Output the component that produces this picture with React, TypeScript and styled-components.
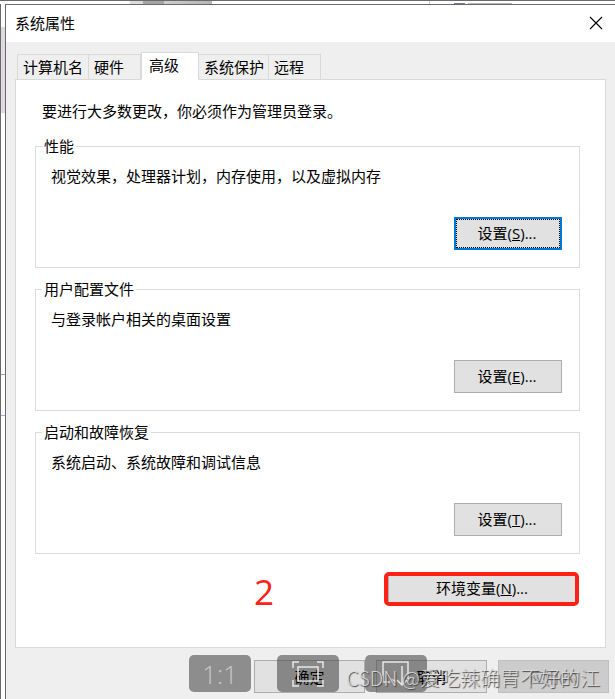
import React from "react";
import styled, { createGlobalStyle } from "styled-components";

const GlobalStyle = createGlobalStyle`
  * { box-sizing: border-box; }
  html, body, #root { height: 100%; }
  body {
    margin: 0;
    overflow: hidden;
    background: #fff;
    color: #000;
    font: 15px/20px "Open Sans", "Noto Sans CJK SC", sans-serif;
  }
  button { font: inherit; color: inherit; padding: 0; }
`;

const Desktop = styled.div`
  display: grid;
  grid-template: 4px 1fr / 5px 1fr;
  height: 100vh;
  overflow: hidden;
`;

const BackTop = styled.div`
  grid-column: 1 / 3;
  border-top: 1px solid #6b696b;
  background:
    linear-gradient(#a5a5a5, #a5a5a5) 143px 0 / 21px 3px no-repeat,
    linear-gradient(90deg, #dededf, #b5b5b5) 130px 0 / 82px 3px no-repeat,
    linear-gradient(#6b7f9c, #6b7f9c) 454px 2px / 11px 1px no-repeat,
    linear-gradient(#b5b5b5, #b5b5b5) 468px 2px / 44px 1px no-repeat,
    linear-gradient(#c6c6c6, #c6c6c6) 429px 0 / 1px 3px no-repeat,
    #fff;
`;

const BackLeft = styled.div`
  border-left: 1px solid #6b696b;
  background:
    linear-gradient(#dedbde, #dedbde) 0 23px / 4px 86px no-repeat,
    linear-gradient(#94b2d6, #94b2d6) 0 370px / 4px 1px no-repeat,
    linear-gradient(#94b2d6, #94b2d6) 0 411px / 4px 1px no-repeat,
    #fff;
`;

const Dialog = styled.main`
  display: flex;
  flex-direction: column;
  min-width: 0;
  min-height: 0;
  border: solid #6b696b;
  border-width: 1px 0 0 1px;
  background: #efefef;
`;

const TitleBar = styled.header`
  display: flex;
  flex: none;
  align-items: center;
  justify-content: space-between;
  height: 37px;
  padding: 0 12px 2px 9px;
  background: #fff;
`;

const Title = styled.h1`
  margin: 0;
  font-size: 15px;
  font-weight: 400;
`;

const CloseButton = styled.button`
  display: flex;
  border: 0;
  background: none;
`;

const TabList = styled.div`
  display: flex;
  flex: none;
  align-items: flex-end;
  height: 38px;
  margin-bottom: -1px;
  padding-left: 11px;
`;

const Tab = styled.button<{ $width: number; $active?: boolean }>`
  position: relative;
  width: ${(p) => p.$width}px;
  height: ${(p) => (p.$active ? 28 : 26)}px;
  padding: ${(p) => (p.$active ? "0 0 2px 7px" : "0 0 0 5px")};
  border: 1px solid #d9d9d9;
  border-left-width: ${(p) => (p.$width === 72 || p.$active ? 1 : 0)}px;
  border-bottom-color: ${(p) => (p.$active ? "#fff" : "#d9d9d9")};
  background: ${(p) => (p.$active ? "#fff" : "#efefef")};
  text-align: left;
  white-space: nowrap;
`;

const Panel = styled.section`
  flex: none;
  margin: 0 9px;
  padding: 21px 25px 37px 19px;
  border: 1px solid #d9d9d9;
  background: #fff;
`;

const Notice = styled.p`
  margin: 0 0 15px 7px;
`;

const Group = styled.fieldset`
  display: flex;
  flex-direction: column;
  min-width: 0;
  height: 132px;
  margin: 0 0 11px;
  padding: 10px 17px 17px 15px;
  border: 1px solid #dcdcdc;
`;

const Legend = styled.legend`
  margin-left: -9px;
  padding: 0 2px;
`;

const Description = styled.p`
  margin: 0;
`;

const PushButton = styled.button<{ $default?: boolean }>`
  align-self: flex-end;
  width: 108px;
  height: 33px;
  margin-top: auto;
  padding: 0 2px 2px 0;
  border: ${(p) => (p.$default ? "2px solid #0078d7" : "1px solid #adadad")};
  outline: ${(p) => (p.$default ? "1px dotted #000" : "none")};
  outline-offset: -3px;
  background: #e1e1e1;
`;

const EnvironmentRow = styled.div`
  display: flex;
  align-items: center;
  justify-content: space-between;
  margin: 14px 0 0;
`;

const StepNumber = styled.span`
  margin-left: 219px;
  padding-top: 6px;
  color: #ff2116;
  font: 35px/36px "Open Sans", sans-serif;
`;

const Highlight = styled.div`
  display: flex;
  width: 195px;
  height: 34px;
  margin-right: 1px;
  border: 4px solid #ff2116;
  border-radius: 5px;
`;

const EnvironmentButton = styled.button`
  flex: 1;
  padding-bottom: 3px;
  border: 0;
  border-left: 1px solid #adadad;
  background: #e1e1e1;
`;

const Footer = styled.footer`
  display: flex;
  position: relative;
  flex: 1;
  align-items: flex-start;
  justify-content: flex-end;
  gap: 11px;
  min-height: 50px;
  padding: 12px 6px 0 0;
`;

const FooterButton = styled.button`
  width: 111px;
  height: 33px;
  border: 1px solid #adadad;
  background: #e1e1e1;
  &:disabled {
    border-color: #bfbfbf;
    background: #ccc;
    color: #838383;
  }
`;

const FooterLabel = styled.span`
  position: relative;
  z-index: 1;
`;

const ViewerTools = styled.div`
  display: flex;
  position: absolute;
  top: 7px;
  left: 183px;
  gap: 26px;
`;

const ViewerButton = styled.button`
  display: flex;
  align-items: center;
  justify-content: center;
  width: 62px;
  height: 37px;
  border: 0;
  border-radius: 5px;
  background: rgba(70, 70, 70, 0.58);
  color: #c8c8c8;
  font-size: 26px;
  font-weight: 300;
  svg {
    position: relative;
    z-index: 2;
  }
`;

const Watermark = styled.span`
  position: absolute;
  z-index: 3;
  top: 18px;
  right: 15px;
  color: rgba(225, 225, 225, 0.85);
  font: 20px/24px "Noto Sans CJK SC", sans-serif;
  font-weight: 300;
  text-shadow: 1px 1px 1px #444;
  white-space: nowrap;
`;

const tabs = [
  { label: "计算机名", width: 72 },
  { label: "硬件", width: 52 },
  { label: "高级", width: 58, active: true },
  { label: "系统保护", width: 70 },
  { label: "远程", width: 52 },
];

const groups = [
  { name: "性能", text: "视觉效果，处理器计划，内存使用，以及虚拟内存", hotkey: "S" },
  { name: "用户配置文件", text: "与登录帐户相关的桌面设置", hotkey: "E" },
  { name: "启动和故障恢复", text: "系统启动、系统故障和调试信息", hotkey: "T" },
];

export default function App() {
  return (
    <Desktop>
      <GlobalStyle />
      <BackTop />
      <BackLeft />
      <Dialog>
        <TitleBar>
          <Title>系统属性</Title>
          <CloseButton aria-label="关闭">
            <svg width="14" height="14" viewBox="0 0 14 14" stroke="#000" strokeWidth="1.1">
              <path d="M1 1 13 13M13 1 1 13" />
            </svg>
          </CloseButton>
        </TitleBar>
        <TabList role="tablist">
          {tabs.map((t) => (
            <Tab key={t.label} role="tab" aria-selected={!!t.active} $width={t.width} $active={t.active}>
              {t.label}
            </Tab>
          ))}
        </TabList>
        <Panel role="tabpanel">
          <Notice>要进行大多数更改，你必须作为管理员登录。</Notice>
          {groups.map((g, i) => (
            <Group key={g.name}>
              <Legend>{g.name}</Legend>
              <Description>{g.text}</Description>
              <PushButton $default={i === 0}>
                设置(<u>{g.hotkey}</u>)...
              </PushButton>
            </Group>
          ))}
          <EnvironmentRow>
            <StepNumber>2</StepNumber>
            <Highlight>
              <EnvironmentButton>
                环境变量(<u>N</u>)...
              </EnvironmentButton>
            </Highlight>
          </EnvironmentRow>
        </Panel>
        <Footer>
          <FooterButton><FooterLabel>确定</FooterLabel></FooterButton>
          <FooterButton><FooterLabel>取消</FooterLabel></FooterButton>
          <FooterButton disabled><FooterLabel>应用(A)</FooterLabel></FooterButton>
          <ViewerTools>
            <ViewerButton>1:1</ViewerButton>
            <ViewerButton aria-label="适应窗口">
              <svg width="32" height="26" viewBox="0 0 32 26" fill="none" stroke="#e8e8e8" strokeWidth="1.5">
                <path d="M1 7V1h6M25 1h6v6M31 19v6h-6M7 25H1v-6M6 6h20v14H6z" />
              </svg>
            </ViewerButton>
            <ViewerButton aria-label="下载">
              <svg width="32" height="26" viewBox="0 0 32 26" fill="none" stroke="#e8e8e8" strokeWidth="1.5">
                <path d="M10 21H3V1h25v17M22 5v19M11 18l5 3M17 19l5 5 5-5" />
              </svg>
            </ViewerButton>
          </ViewerTools>
          <Watermark>CSDN @爱吃辣确胃不好的江</Watermark>
        </Footer>
      </Dialog>
    </Desktop>
  );
}
